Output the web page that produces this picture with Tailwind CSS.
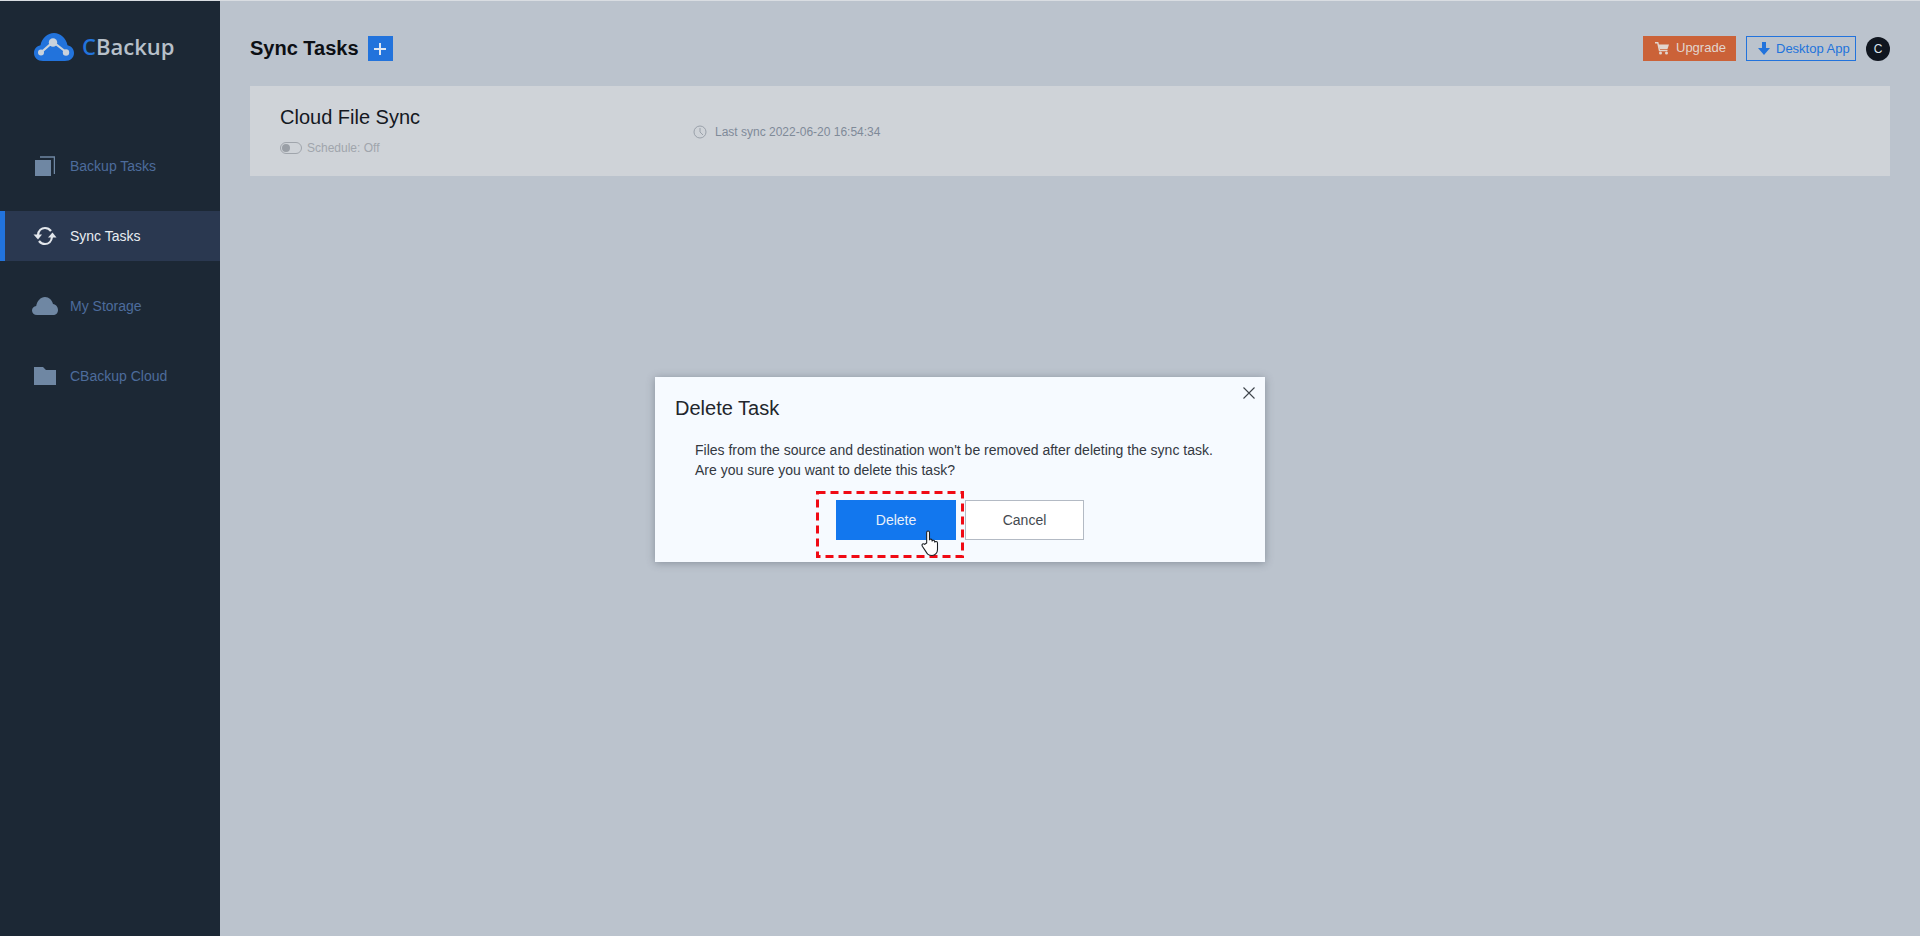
<!DOCTYPE html>
<html lang="en">
<head>
<meta charset="utf-8">
<title>CBackup</title>
<script src="https://cdn.jsdelivr.net/npm/@tailwindcss/browser@4"></script>
</head>
<body class="m-0 h-[936px] w-[1920px] overflow-hidden bg-[#bbc3cd] font-['Liberation_Sans',Arial,sans-serif]">
<div class="relative flex h-[936px] w-[1920px] border-t border-[#d9dde2]">
  <aside class="flex w-[220px] shrink-0 flex-col bg-[#1c2835]">
    <div class="flex h-[92px] items-start pl-[34px] pt-[32px]">
      <svg width="40" height="28" viewBox="0 0 40 28" class="shrink-0">
        <path d="M9 28C3.500 28 0 24.500 0 20C0 16 2.500 13 6.500 12.200C8 5 13.500 0 20 0C26.500 0 32 5 33.500 12.200C37.500 13 40 16 40 20C40 24.500 36.500 28 31 28Z" fill="#2273dc"/>
        <path d="M7 19.500L19 9L32 19" fill="none" stroke="#c9d2dc" stroke-width="2.200"/>
        <circle cx="19" cy="9.500" r="4.200" fill="#c9d2dc"/><circle cx="7" cy="19.500" r="3" fill="#c9d2dc"/><circle cx="32" cy="19.500" r="3.200" fill="#c9d2dc"/>
      </svg>
      <div class="ml-[8px] mt-[-3px] font-['Open_Sans',sans-serif] text-[22px] leading-[32px] font-semibold text-[#b7c0ca]"><span class="text-[#2273dc]">C</span>Backup</div>
    </div>
    <nav class="mt-[48px] flex flex-col gap-[20px] text-[14px] text-[#4d6c9c]">
      <a class="flex h-[50px] items-center pl-[35px]">
        <svg width="20" height="20" viewBox="0 0 20 20" class="shrink-0"><path d="M5 1H19.500V18" fill="none" stroke="#6f87a3" stroke-width="1.500"/><rect x="0" y="4" width="16" height="16" fill="#6f87a3"/></svg>
        <span class="ml-[15px]">Backup Tasks</span>
      </a>
      <a class="flex h-[50px] items-center border-l-[5px] border-[#2273dc] bg-[#2a3850] pl-[28px] text-[#e8edf2]">
        <svg width="24" height="20" viewBox="0 0 24 20" class="shrink-0" fill="none" stroke="#e3e7ec" stroke-width="2.200"><path d="M5 9C5.500 4.500 8.500 2 12 2C14.500 2 16.500 3 18 5"/><path d="M19 11C18.500 15.500 15.500 18 12 18C9.500 18 7.500 17 6 15"/><path d="M0.500 8.500H9L5 13.500Z" fill="#e3e7ec" stroke="none"/><path d="M15 11.500H23.500L19.500 6.500Z" fill="#e3e7ec" stroke="none"/></svg>
        <span class="ml-[13px]">Sync Tasks</span>
      </a>
      <a class="flex h-[50px] items-center pl-[32px]">
        <svg width="26" height="18" viewBox="0 0 26 18" class="shrink-0"><path d="M5 18C2 18 0 16 0 13.500C0 11 1.800 9.300 4.200 9C5 4 8.500 0 13 0C17 0 20 3 21 7C24 7.500 26 10 26 13C26 16 24 18 21 18Z" fill="#6f87a3"/></svg>
        <span class="ml-[12px]">My Storage</span>
      </a>
      <a class="flex h-[50px] items-center pl-[34px]">
        <svg width="22" height="18" viewBox="0 0 22 18" class="shrink-0"><path d="M0 0H9L12 3H22V18H0Z" fill="#6f87a3"/></svg>
        <span class="ml-[14px]">CBackup Cloud</span>
      </a>
    </nav>
  </aside>
  <main class="flex min-w-0 flex-1 flex-col pl-[30px] pr-[30px]">
    <header class="flex h-[85px] items-start justify-between pt-[35px]">
      <div class="flex items-center">
        <h1 class="text-[20px] leading-[25px] font-bold text-[#0c0f14]">Sync Tasks</h1>
        <span class="ml-[9px] flex h-[25px] w-[25px] items-center justify-center bg-[#2273dc]">
          <svg width="14" height="14" viewBox="0 0 14 14"><path d="M7 1V13M1 7H13" stroke="#dfe7f2" stroke-width="2"/></svg>
        </span>
      </div>
      <div class="flex items-center text-[13px]">
        <a class="flex h-[25px] w-[93px] items-center bg-[#cb6238] pb-[1px] pl-[12px] text-[#e2d5ce]">
          <svg width="14" height="13" viewBox="0 0 14 13" class="shrink-0"><path d="M0 0.800H2.800L4.500 8.500H12.500" fill="none" stroke="#e2d5ce" stroke-width="1.400"/><path d="M3.500 2.500H14L12.500 7H4.500Z" fill="#e2d5ce"/><circle cx="5.500" cy="11" r="1.500" fill="#e2d5ce"/><circle cx="11.500" cy="11" r="1.500" fill="#e2d5ce"/></svg>
          <span class="ml-[7px]">Upgrade</span>
        </a>
        <a class="ml-[10px] flex h-[25px] w-[110px] items-center border border-[#2273dc] pl-[11px] text-[#2273dc]">
          <svg width="12" height="13" viewBox="0 0 12 13" class="shrink-0"><path d="M4 0H8V6H12L6 13L0 6H4Z" fill="#2273dc"/></svg>
          <span class="ml-[6px]">Desktop App</span>
        </a>
        <span class="ml-[10px] flex h-[24px] w-[24px] items-center justify-center rounded-full bg-[#10161f] text-[12px] text-[#dfe5ec]">C</span>
      </div>
    </header>
    <section class="relative h-[90px] bg-[#cfd3d8]">
      <div class="absolute left-[30px] top-[19px] text-[20px] leading-[24px] text-[#14181f]">Cloud File Sync</div>
      <div class="absolute left-[30px] top-[54px] flex items-center text-[12px] leading-[16px] text-[#a0a5ac]">
        <span class="flex h-[12px] w-[22px] items-center rounded-full border border-[#a0a5ac] pl-[1px]"><span class="h-[8px] w-[8px] rounded-full bg-[#9a9fa6]"></span></span>
        <span class="ml-[5px]">Schedule: Off</span>
      </div>
      <div class="absolute left-[443px] top-[38px] flex items-center text-[12px] leading-[16px] text-[#7f8a98]">
        <svg width="14" height="14" viewBox="0 0 14 14" class="shrink-0" fill="none" stroke="#9aa1aa" stroke-width="1"><circle cx="7" cy="7" r="6"/><path d="M7 3V7L10 10"/></svg>
        <span class="ml-[8px]">Last sync 2022-06-20 16:54:34</span>
      </div>
    </section>
  </main>
  <div class="absolute left-[655px] top-[376px] h-[185px] w-[610px] bg-[#f6faff] shadow-[0_1px_8px_rgba(70,80,95,0.45)]">
    <h2 class="absolute left-[20px] top-[19px] text-[20px] leading-[24px] text-[#22262c]">Delete Task</h2>
    <svg width="12" height="12" viewBox="0 0 12 12" class="absolute right-[10px] top-[10px]"><path d="M0.500 0.500L11.500 11.500M11.500 0.500L0.500 11.500" stroke="#3f444b" stroke-width="1.100"/></svg>
    <p class="absolute left-[40px] top-[63px] w-[540px] text-[14px] leading-[20px] text-[#33383f]">Files from the source and destination won't be removed after deleting the sync task.<br>Are you sure you want to delete this task?</p>
    <div class="absolute left-[181px] top-[123px] flex gap-[9px] text-[14px]">
      <button class="h-[40px] w-[120px] bg-[#1277ee] text-[#e8f0fa]">Delete</button>
      <button class="h-[40px] w-[119px] border border-[#b3bac4] bg-white text-[#44494f]">Cancel</button>
    </div>
    <svg width="148" height="67" viewBox="0 0 148 67" fill="none" class="absolute left-[161px] top-[114px]"><rect x="1.500" y="1.500" width="145" height="64" stroke="#f00a14" stroke-width="3" stroke-dasharray="8 5"/></svg>
    <svg width="20" height="26" viewBox="0 0 18 24" class="absolute left-[266px] top-[153px]"><path d="M5 12V2.200C5 0.500 7.600 0.500 7.600 2.200V9.500C7.600 8 10 8 10 9.700V10.500C10 9 12.400 9 12.400 10.700V11.500C12.400 10.200 15 10.200 15 12V18C15 21 13 23.500 10 23.500C6.500 23.500 5.500 22 4 19.500L1 15C0 13 2 12 3.200 13.200Z" fill="#fff" stroke="#1b1f24" stroke-width="1"/></svg>
  </div>
</div>
</body>
</html>
